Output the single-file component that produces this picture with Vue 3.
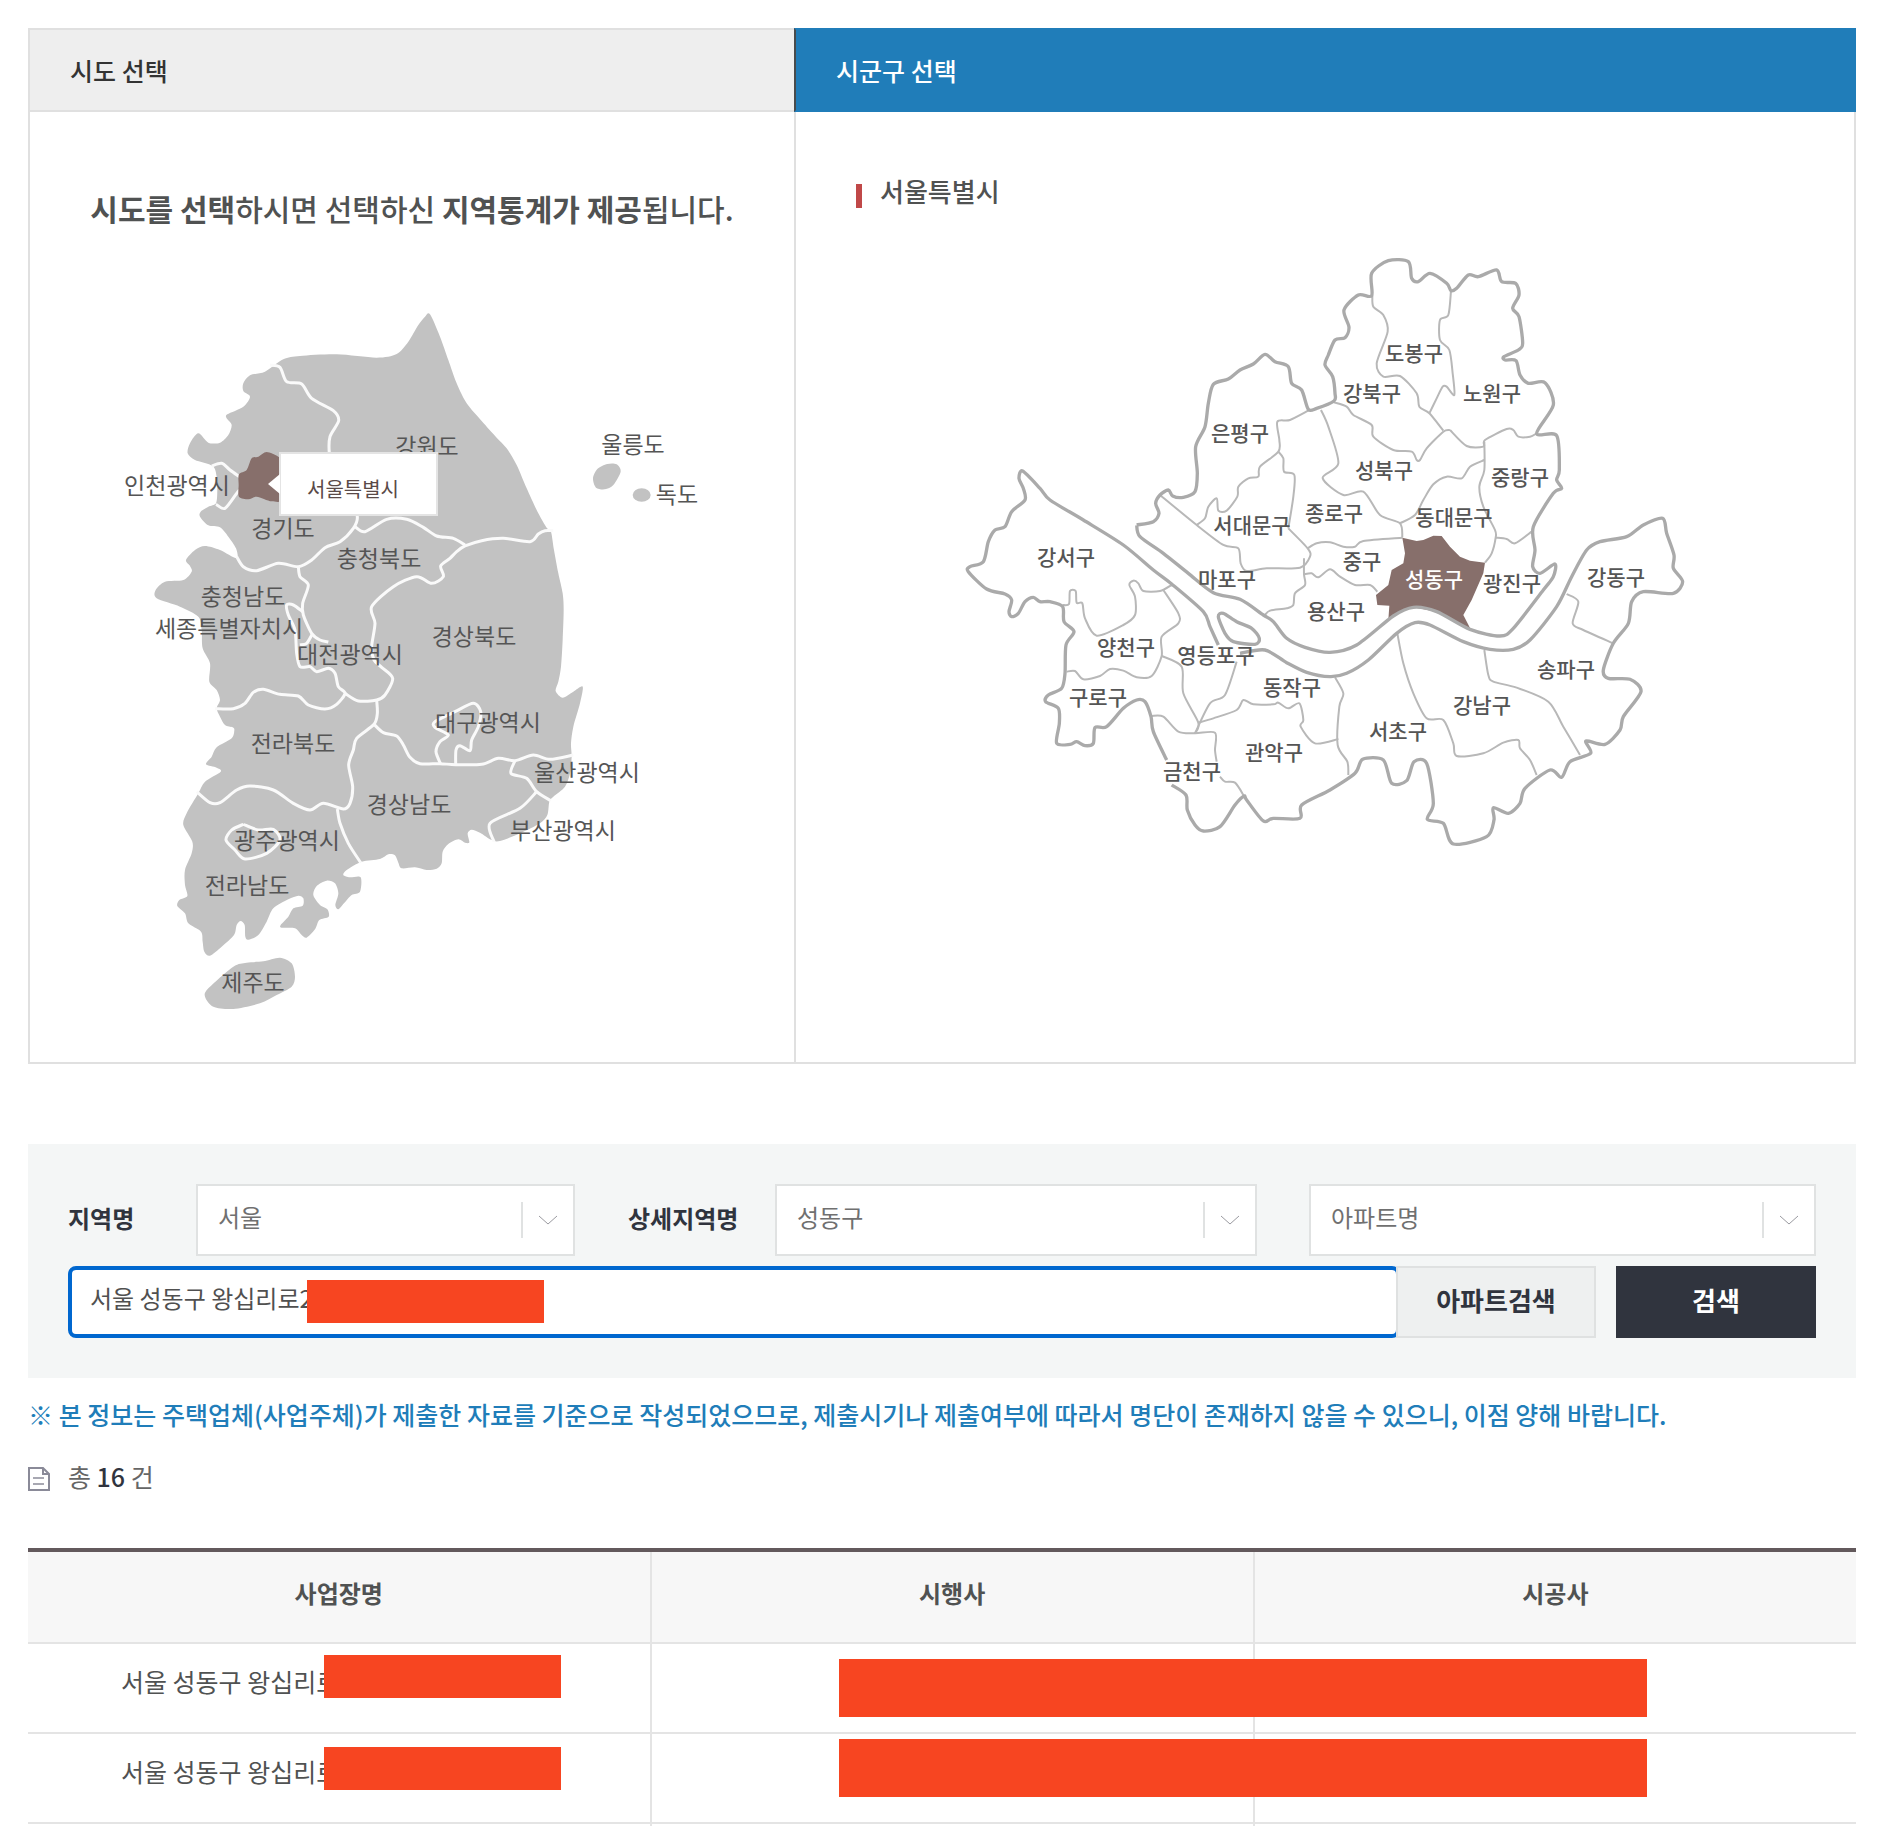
<template>
  <main class="page">
    <section class="region">
      <div class="region-col">
        <h2 class="region-head">시도 선택</h2>
        <div class="region-body">
          <p class="guide">
            <b>시도를 선택</b>하시면 선택하신 <b>지역통계가 제공</b>됩니다.
          </p>
          <div class="map-wrap">
            <svg class="map korea" viewBox="0 0 584 720" role="img" aria-label="시도 지도">
              <g transform="scale(0.33333)">
                <path class="land" :d="smooth(mainland, true)" />
                <path class="land" :d="smooth(jeju, true)" />
                <path class="land" :d="smooth(ulleung, true)" />
                <ellipse class="land" cx="1565" cy="615" rx="27" ry="20" />
                <path v-for="line in koreaLines" :key="line" class="border" :d="smooth(line)" />
                <path class="picked" :d="smooth(seoulShape, true)" />
              </g>
              <text v-for="[name, x, y] in sidoLabels" :key="name" :x="x" :y="y">{{ name }}</text>
            </svg>
            <div class="tooltip">서울특별시</div>
          </div>
        </div>
      </div>

      <div class="region-col">
        <h2 class="region-head active">시군구 선택</h2>
        <div class="region-body detail">
          <h3 class="city">서울특별시</h3>
          <svg class="map seoul" viewBox="0 0 750 640" role="img" aria-label="시군구 지도">
            <g transform="scale(0.33333)">
              <path v-for="line in seoulLines" :key="line" class="thin" :d="smooth(line)" />
              <path class="picked" :d="straight(seongdong)" />
              <path v-for="line in seoulOutlines" :key="line" class="thick" :d="smooth(line)" />
              <path class="thick" :d="smooth(yeouido, true)" />
            </g>
            <text
              v-for="[name, x, y] in guLabels"
              :key="name"
              :class="{ on: name === '성동구' }"
              :x="x"
              :y="y"
            >{{ name }}</text>
          </svg>
        </div>
      </div>
    </section>

    <form class="search" @submit.prevent>
      <div class="filters">
        <label for="area">지역명</label>
        <div class="select">
          <select id="area"><option>서울</option></select>
          <svg class="arrow" viewBox="0 0 20 10"><path d="M1 1l9 8 9-8" /></svg>
        </div>
        <label class="second" for="detail">상세지역명</label>
        <div class="select">
          <select id="detail"><option>성동구</option></select>
          <svg class="arrow" viewBox="0 0 20 10"><path d="M1 1l9 8 9-8" /></svg>
        </div>
        <div class="select last">
          <select aria-label="아파트명"><option>아파트명</option></select>
          <svg class="arrow" viewBox="0 0 20 10"><path d="M1 1l9 8 9-8" /></svg>
        </div>
      </div>
      <div class="keyword">
        <div class="field">
          <input v-model="keyword" type="text" aria-label="주소" />
          <span class="cover"></span>
        </div>
        <button type="button" class="btn-apt">아파트검색</button>
        <button type="submit" class="btn-search">검색</button>
      </div>
    </form>

    <p class="notice">
      ※ 본 정보는 주택업체(사업주체)가 제출한 자료를 기준으로 작성되었으므로, 제출시기나 제출여부에 따라서 명단이 존재하지 않을 수 있으니, 이점 양해 바랍니다.
    </p>

    <p class="total">
      <svg class="doc" viewBox="0 0 22 24">
        <path d="M1 1h14l6 6v16H1z" />
        <path d="M15 1v6h6" />
        <path class="rule" d="M5 11h11M5 17h11" />
      </svg>
      <span>총 <b>16</b> 건</span>
    </p>

    <table class="list">
      <thead>
        <tr>
          <th class="name">사업장명</th>
          <th>시행사</th>
          <th>시공사</th>
        </tr>
      </thead>
      <tbody>
        <tr v-for="(row, i) in rows" :key="i">
          <td class="address">{{ row }}<span class="cover"></span></td>
          <td class="company"><span class="cover wide"></span></td>
          <td></td>
        </tr>
        <tr class="tail">
          <td></td>
          <td></td>
          <td></td>
        </tr>
      </tbody>
    </table>
  </main>
</template>

<script setup>
import { ref } from "vue";

const keyword = ref("서울 성동구 왕십리로2");
const rows = ["서울 성동구 왕십리로", "서울 성동구 왕십리로"];

const parse = (str) => str.trim().split(/\s+/).map((p) => p.split(",").map(Number));

// Catmull-Rom through every point, written out as cubic beziers
function smooth(str, closed = false) {
  const pts = parse(str);
  const n = pts.length;
  const at = (i) => (closed ? pts[(i + n) % n] : pts[Math.max(0, Math.min(n - 1, i))]);
  let d = `M${pts[0]}`;
  for (let i = 0; i < (closed ? n : n - 1); i++) {
    const [a, b, c, e] = [at(i - 1), at(i), at(i + 1), at(i + 2)];
    const c1 = [b[0] + (c[0] - a[0]) / 7, b[1] + (c[1] - a[1]) / 7];
    const c2 = [c[0] - (e[0] - b[0]) / 7, c[1] - (e[1] - b[1]) / 7];
    d += `C${c1} ${c2} ${c}`;
  }
  return closed ? d + "Z" : d;
}

const straight = (str) => `M${parse(str).join("L")}Z`;

const mainland = `930,73 960,140 985,210 1010,280 1040,340 1085,393 1130,443 1160,475 1190,525
  1220,595 1255,670 1280,713 1293,725 1302,780 1315,850 1328,910 1331,960 1328,1050 1323,1130
  1315,1175 1307,1203 1328,1223 1360,1205 1388,1190 1380,1240 1360,1310 1353,1360 1355,1400
  1350,1450 1335,1490 1300,1520 1288,1535 1282,1575 1260,1600 1200,1630 1140,1653 1115,1650
  1080,1628 1055,1619 1043,1630 1048,1657 1035,1658 1015,1648 985,1662 968,1685 965,1720
  950,1736 920,1740 885,1732 845,1735 835,1718 825,1696 805,1693 780,1707 725,1715 680,1740
  670,1755 690,1762 722,1762 720,1805 695,1815 672,1840 655,1858 646,1845 655,1810 645,1780
  620,1772 590,1788 580,1815 600,1845 622,1858 626,1880 598,1890 585,1918 560,1943 545,1935
  525,1915 485,1913 482,1905 505,1880 520,1855 548,1847 550,1825 535,1817 505,1828 460,1855
  440,1895 415,1935 385,1949 376,1940 374,1905 362,1893 350,1905 342,1935 305,1970 270,1997
  253,1985 248,1955 243,1925 205,1900 195,1870 172,1848 178,1830 202,1818 195,1785 195,1740
  215,1690 217,1655 190,1605 200,1570 235,1510 255,1475 302,1445 290,1433 258,1423 275,1400
  290,1372 335,1345 343,1320 338,1312 315,1305 300,1280 290,1255 300,1230 290,1200 268,1175
  270,1120 248,1075 245,1020 235,980 180,950 110,925 107,900 135,875 190,870 215,845 210,828
  198,810 225,780 255,768 300,780 350,805 348,775 325,740 300,712 265,706 240,680 242,665
  265,650 288,640 292,600 290,560 278,528 225,510 203,490 210,460 235,430 265,458 300,458
  325,435 335,405 320,385 322,373 370,350 390,320 370,303 370,280 390,256 435,245 490,208
  540,198 650,193 770,203 830,192 865,155 895,105 915,80`;

const jeju = `255,2120 265,2095 340,2030 380,2018 430,2014 480,2003 515,2020 525,2060 515,2090
  470,2115 420,2140 340,2157 280,2150`;
const ulleung = "1419,565 1432,537 1462,522 1490,523 1502,545 1480,585 1455,598 1428,593";
const seoulShape = `440,486 475,500 490,520 490,625 455,634 410,620 385,628 357,620 356,585
  357,553 380,540 395,505 415,500`;

const koreaLines = [
  "450,225 480,232 500,275 545,282 575,325 640,362 656,392 630,440 628,490 640,560 690,620 712,680 700,715 660,755 615,773 575,810 535,830 475,820 410,842 370,830 350,800",
  "705,710 735,725 800,688 860,688 910,712 950,738 1000,745 1035,765",
  "1300,722 1275,722 1255,732 1230,755 1150,745 1085,752 1035,768 1010,785 990,805 962,828 970,860 935,880 890,860 820,890 755,950 765,1000 755,1070 762,1110 785,1132 818,1165 795,1215 770,1230 715,1233 675,1210",
  "535,830 540,860 565,885 548,940 550,975 575,1030 600,1050 625,1056",
  "548,965 520,945 500,945 505,975 525,1020 530,1090 540,1130 570,1130 590,1145 625,1135 645,1150 655,1190 675,1210 650,1243 615,1257 565,1245 535,1218 480,1213 430,1198 400,1207 375,1240 340,1256 285,1256",
  "577,1032 560,1060 540,1065",
  "770,1230 772,1270 762,1303 710,1345 700,1380 686,1425 698,1490 690,1540 670,1557 610,1540 570,1560 520,1540 460,1500 390,1488 350,1500 300,1538 270,1538 230,1505",
  "652,1557 660,1600 685,1660 722,1718",
  "762,1303 790,1328 830,1338 850,1365 870,1402 900,1421 960,1421 1007,1424 1085,1423 1135,1405 1185,1412 1240,1395 1290,1408 1360,1395",
  "962,1422 948,1385 960,1355 985,1335 945,1312 945,1295 1005,1265 1060,1240 1082,1265 1075,1310 1055,1350 1050,1382 1020,1367 1008,1380 1007,1422",
  "1185,1412 1173,1450 1220,1465 1250,1505 1292,1532",
  "1250,1505 1200,1555 1110,1600 1122,1655",
  "370,1603 415,1620 460,1618 480,1650 440,1690 375,1707 345,1680 318,1650 335,1620 370,1603",
  "275,528 305,520 330,540 358,560",
  "288,643 315,655 350,610 358,600",
];

const sidoLabels = [
  ["강원도", 307, 165],
  ["인천광역시", 57, 204],
  ["경기도", 163, 247],
  ["충청북도", 259, 277],
  ["충청남도", 123, 315],
  ["세종특별자치시", 109, 347],
  ["대전광역시", 230, 373],
  ["경상북도", 354, 355],
  ["울릉도", 513, 163],
  ["독도", 557, 213],
  ["전라북도", 173, 462],
  ["광주광역시", 167, 559],
  ["전라남도", 127, 604],
  ["제주도", 133, 701],
  ["대구광역시", 368, 441],
  ["울산광역시", 467, 491],
  ["부산광역시", 443, 549],
  ["경상남도", 289, 523],
];

// North of the river, then the south side in two runs
const seoulOutlines = [
  `560,855 610,845 627,820 617,790 630,765 655,750 668,768 700,772 735,755 742,700 737,620
  765,560 775,490 790,433 835,417 870,390 910,372 945,343 975,365 1015,380 1025,430 1055,450
  1075,508 1100,505 1152,483 1155,460 1148,410 1125,375 1135,345 1155,300 1185,293 1197,262
  1182,210 1225,165 1265,167 1265,100 1315,62 1375,65 1385,115 1405,125 1440,100 1490,130
  1503,152 1520,145 1555,105 1585,110 1640,90 1655,125 1697,130 1707,165 1688,205 1707,230
  1718,310 1705,330 1662,350 1665,360 1698,362 1710,405 1735,430 1785,428 1810,495 1760,580
  1820,587 1828,690 1820,720 1835,745 1810,760 1750,860 1755,930 1748,980 1770,1000 1815,972
  1810,1010 1780,1050 1690,1165 1650,1188 1560,1168 1460,1115 1390,1102 1330,1128 1220,1215
  1140,1237 1065,1222 1010,1195 970,1145 940,1125 870,1078 790,1058 715,1000 640,940 570,890
  560,855`,
  `870,1240 945,1230 1010,1268 1070,1297 1140,1310 1190,1300 1255,1260 1340,1180 1395,1148
  1440,1155 1540,1205 1620,1228 1690,1228 1740,1200 1820,1100 1865,1010 1910,930 1950,905
  2030,890 2080,855 2138,835 2150,880 2172,945 2170,985 2198,1025 2170,1060 2080,1055
  2045,1085 2035,1150 1990,1210 1960,1290 1975,1315 2040,1318 2073,1355 2020,1430 2010,1470
  1965,1513 1908,1503 1922,1540 1860,1565 1835,1612 1800,1590 1725,1645 1710,1690 1675,1720
  1630,1703 1632,1740 1610,1790 1510,1812 1480,1750 1432,1738 1450,1690 1430,1570 1392,1565
  1370,1622 1325,1630 1300,1560 1238,1558 1215,1600 1140,1650 1055,1695 1050,1735 970,1735
  940,1743 890,1680 882,1668 855,1695 810,1760 760,1773 735,1755 712,1710 708,1665 665,1635`,
  `650,1560 610,1475 603,1430 585,1385 560,1380 520,1405 470,1460 435,1463 430,1510 405,1517
  380,1505 360,1513 320,1510 328,1450 325,1405 287,1385 295,1365 335,1345 345,1300 348,1215
  372,1175 342,1145 338,1100 300,1085 270,1085 250,1072 225,1085 205,1120 185,1130 177,1115
  185,1080 165,1062 110,1047 55,995 60,980 100,965 115,905 135,870 165,860 185,815 225,780
  220,745 207,715 218,693 270,745 300,780 400,840 520,915 610,990 665,1032 760,1115 780,1160
  805,1215`,
];

const yeouido = "805,1130 820,1120 860,1145 905,1165 928,1195 915,1213 850,1205 825,1180";

const seoulLines = [
  "630,765 740,855 820,915 865,925 872,970 890,993 950,985 1050,983 1080,950 1073,925 1015,865",
  "740,855 765,835 775,800 800,775 805,812 830,812 862,770 865,740 895,715 925,710 930,680 985,635 988,600 982,545 1020,540 1075,512",
  "985,635 1000,655 1002,695 1033,705 1030,770 1015,865",
  "1113,510 1135,560 1165,670 1118,714 1180,765 1240,755 1290,825 1350,850 1357,893",
  "1152,487 1190,500 1210,525 1265,555 1270,590 1330,630 1385,635 1400,660 1410,660 1430,625 1480,575 1500,570",
  "1267,167 1270,200 1300,225 1313,275 1280,370 1300,410 1350,408 1400,460 1408,500 1438,520 1480,572",
  "1503,152 1495,225 1470,240 1470,300 1498,330 1508,400 1513,465 1490,440 1478,440 1460,475 1438,520",
  "1500,570 1550,618 1600,620 1605,600 1670,567 1690,570 1705,590 1740,590 1760,580",
  "1603,605 1603,690 1588,740 1600,800 1635,870 1637,893 1625,940 1605,968",
  "1603,660 1560,680 1535,715 1490,710 1450,733 1420,780 1395,825 1350,850",
  "1637,893 1670,897 1695,910 1745,875",
  "1073,925 1100,910 1140,907 1180,920 1215,920 1240,903 1357,893",
  "1062,1003 1085,1000 1105,1012 1140,988 1170,1010 1215,1035 1260,1035 1282,1055",
  "1062,955 1062,1003 1065,1035 1035,1060 1030,1095 1010,1105 960,1112 945,1125",
  "338,1095 357,1092 360,1053 377,1053 380,1088 397,1090 405,1135 440,1187 520,1155 555,1125 555,1070 538,1035 550,1022 565,1030 580,1053 630,1053 665,1035",
  "640,1050 685,1120 685,1150 635,1190 635,1248 605,1308 560,1312 520,1292 480,1287 450,1308 400,1318 375,1293 350,1295",
  "635,1248 695,1280 700,1360 745,1448 735,1480",
  "860,1265 825,1365 780,1390 735,1480",
  "605,1428 640,1430 685,1475 735,1480 795,1478 795,1530 800,1565",
  "810,1610 825,1625 855,1628 882,1668",
  "745,1448 790,1435 860,1410 880,1380 910,1393 970,1393 985,1388 1015,1405 1048,1390 1060,1440 1052,1460 1095,1510 1165,1497",
  "1155,1312 1180,1360 1168,1400 1163,1515 1192,1565 1195,1605",
  "1342,1180 1360,1270 1390,1360 1430,1435 1480,1440 1510,1510 1520,1548 1600,1540 1660,1508 1705,1500 1710,1525 1740,1560 1760,1605",
  "1603,1230 1615,1305 1630,1325 1700,1343 1795,1385 1840,1460 1890,1545",
  "1850,1062 1885,1085 1868,1150 1900,1170 1990,1210",
];

const seongdong = `1357,893 1400,903 1420,900 1450,887 1475,888 1500,920 1530,950 1560,962
  1605,968 1600,1000 1565,1080 1540,1125 1562,1168 1500,1135 1460,1115 1390,1102 1345,1120
  1315,1140 1318,1097 1282,1095 1278,1065 1315,1035 1325,990 1360,970 1365,940`;

const guLabels = [
  ["은평구", 290, 201],
  ["강서구", 116, 325],
  ["서대문구", 302, 293],
  ["마포구", 277, 347],
  ["종로구", 384, 281],
  ["도봉구", 464, 121],
  ["강북구", 422, 161],
  ["노원구", 542, 161],
  ["성북구", 434, 238],
  ["중랑구", 570, 245],
  ["동대문구", 504, 285],
  ["중구", 412, 329],
  ["성동구", 484, 347],
  ["광진구", 562, 351],
  ["강동구", 666, 345],
  ["용산구", 386, 379],
  ["양천구", 176, 415],
  ["영등포구", 266, 423],
  ["동작구", 342, 455],
  ["구로구", 148, 465],
  ["관악구", 324, 520],
  ["금천구", 242, 539],
  ["서초구", 448, 499],
  ["강남구", 532, 473],
  ["송파구", 616, 437],
];
</script>

<style>
body {
  margin: 0;
  background: #fff;
}
</style>

<style scoped>
.page {
  padding: 28px 34px 0 28px;
  font-family: "Noto Sans CJK KR", sans-serif;
  font-size: 24px;
  line-height: 36px;
  color: #505252;
}
.page * {
  box-sizing: border-box;
}
h2,
h3,
p {
  margin: 0;
}

/* region picker */
.region {
  display: grid;
  grid-template-columns: 766fr 1062fr;
}
.region-col {
  display: flex;
  flex-direction: column;
}
.region-head {
  height: 84px;
  padding: 22px 40px;
  border: 2px solid #e0e0e0;
  border-right: 0;
  background: #eee;
  color: #333;
  font-size: 25px;
  font-weight: 500;
}
.region-head.active {
  border-color: #207db9;
  border-left-color: #484b4d;
  background: #207db9;
  color: #fff;
}
.region-body {
  flex: 1;
  display: flex;
  flex-direction: column;
  align-items: center;
  padding: 74px 0 52px;
  border: 2px solid #e0e0e0;
  border-width: 0 0 2px 2px;
}
.region-body.detail {
  padding-top: 59px;
  border-right-width: 2px;
}
.guide {
  margin-bottom: 60px;
  font-size: 30px;
  line-height: 44px;
  font-weight: 500;
}
.guide b {
  font-weight: 700;
}
.city {
  display: flex;
  align-items: center;
  align-self: flex-start;
  gap: 18px;
  margin: 0 0 29px 60px;
  font-size: 26px;
  line-height: 40px;
  font-weight: 500;
}
.city::before {
  content: "";
  width: 6px;
  height: 24px;
  margin-top: 10px;
  background: #c04848;
}

/* maps */
.map-wrap {
  position: relative;
}
.map {
  display: block;
  max-width: 100%;
}
.korea {
  width: 584px;
  font-size: 23px;
  overflow: visible;
}
.seoul {
  width: 750px;
  font-size: 21px;
  font-weight: 500;
}
.map text {
  text-anchor: middle;
  fill: #555;
}
.map text.on {
  fill: #fff;
}
.land {
  fill: #c2c2c2;
}
.picked {
  fill: #876f6b;
}
.border,
.thin,
.thick {
  fill: none;
  stroke-linejoin: round;
}
.border {
  stroke: #fafafa;
  stroke-width: 9;
}
.thin {
  stroke: #b8b8b8;
  stroke-width: 6;
}
.thick {
  stroke: #aaa;
  stroke-width: 10;
}
.tooltip {
  position: absolute;
  left: 159px;
  top: 162px;
  width: 159px;
  height: 64px;
  padding: 17px 0 0 26px;
  border: 2px solid #e4e4e4;
  background: #fff;
  color: #5a4a48;
  font-size: 20px;
}
.tooltip::before {
  content: "";
  position: absolute;
  left: -13px;
  top: 20px;
  border: 10px solid transparent;
  border-left-width: 0;
  border-right: 12px solid #fff;
}

/* search */
.search {
  display: flex;
  flex-direction: column;
  gap: 10px;
  margin-top: 80px;
  padding: 40px;
  background: #f4f6f6;
}
.filters {
  display: grid;
  grid-template-columns: 128px 379fr 200px 482fr 559fr;
  align-items: center;
}
.filters label {
  padding-bottom: 4px;
  color: #30343e;
  font-weight: 700;
}
.filters .second {
  padding-left: 53px;
}
.select {
  position: relative;
  height: 72px;
}
.select.last {
  margin-left: 52px;
}
.select select {
  width: 100%;
  height: 72px;
  padding: 0 60px 6px 20px;
  border: 2px solid #e0e2e2;
  border-radius: 0;
  background: #fff;
  color: #707070;
  font: inherit;
  appearance: none;
}
.select::after {
  content: "";
  position: absolute;
  right: 52px;
  top: 18px;
  width: 2px;
  height: 36px;
  background: #e0e2e2;
}
.arrow {
  position: absolute;
  right: 17px;
  top: 31px;
  width: 20px;
  height: 10px;
  fill: none;
  stroke: #9a9aa0;
}
.keyword {
  display: flex;
}
.field {
  position: relative;
  flex: 1;
  margin-right: -4px;
}
.field input {
  width: 100%;
  height: 72px;
  padding: 0 20px 10px 18px;
  border: 4px solid #0067cf;
  border-radius: 8px;
  outline: 0;
  background: #fff;
  color: #505050;
  font: inherit;
}
.cover {
  position: absolute;
  width: 237px;
  height: 43px;
  background: #f74521;
}
.field .cover {
  left: 239px;
  top: 14px;
}
button {
  width: 200px;
  height: 72px;
  padding: 0 0 6px;
  border: 0;
  font-family: inherit;
  font-size: 26px;
  font-weight: 700;
}
.btn-apt {
  position: relative;
  border: 2px solid #dfe1e1;
  background: #eef0f0;
  color: #30343e;
}
.btn-search {
  margin-left: 20px;
  background: #30343e;
  color: #fff;
}

/* result */
.notice {
  margin-top: 18px;
  color: #207db9;
  font-size: 25px;
  font-weight: 500;
}
.total {
  display: flex;
  align-items: center;
  gap: 18px;
  margin-top: 26px;
  color: #666;
  font-size: 25px;
}
.total b {
  color: #30343e;
  font-weight: 500;
}
.doc {
  width: 22px;
  height: 24px;
  margin-top: 6px;
  fill: none;
  stroke: #8a8a98;
  stroke-width: 2;
}
.doc .rule {
  stroke: #a8a8b2;
}
.list {
  width: 100%;
  margin-top: 54px;
  border-top: 4px solid #63595c;
  border-spacing: 0;
  table-layout: fixed;
}
.list th,
.list td {
  height: 90px;
  padding: 0 0 8px;
  border-bottom: 2px solid #e4e4e4;
}
.list th + th,
.list td + td {
  border-left: 2px solid #e4e4e4;
}
.list th {
  height: 92px;
  background: #f7f7f7;
  font-weight: 700;
}
.list .name {
  width: 34%;
}
.list td {
  position: relative;
}
.list .address {
  padding-left: 93px;
  padding-bottom: 14px;
  font-size: 25px;
}
.list .company {
  z-index: 1;
}
.address .cover {
  left: 296px;
  top: 11px;
}
.list .cover.wide {
  left: 187px;
  top: 15px;
  width: 808px;
  height: 58px;
}
tr:nth-child(2) .address .cover {
  top: 13px;
}
tr:nth-child(2) .cover.wide {
  top: 5px;
}
.list .tail td {
  height: 3px;
  padding: 0;
  border-bottom: 0;
}
</style>
